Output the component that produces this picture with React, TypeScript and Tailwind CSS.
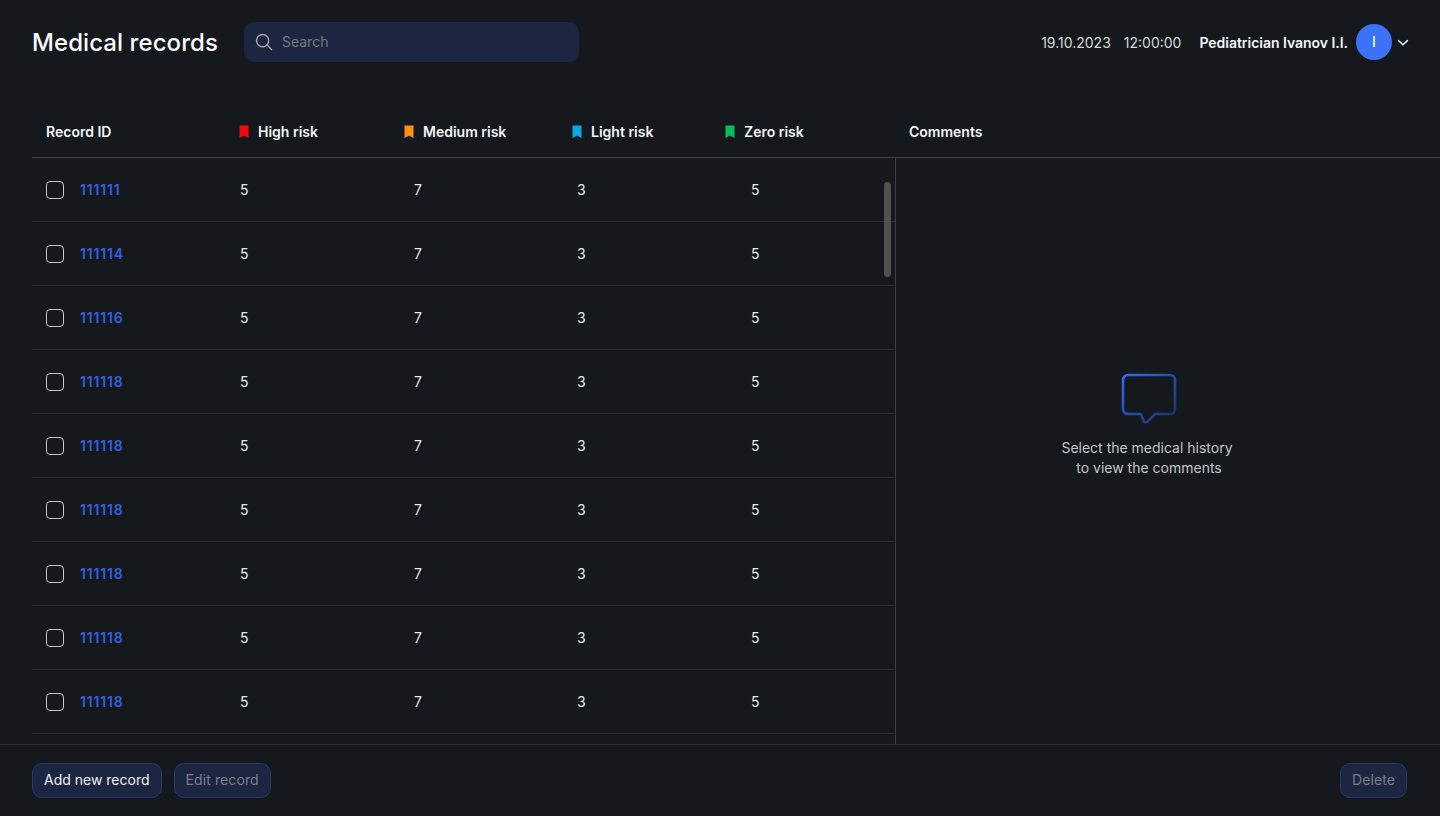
import React from "react";

const ids = ["111111", "111114", "111116", "111118", "111118", "111118", "111118", "111118", "111118"];

function Flag({ color }: { color: string }) {
  return (
    <svg width="10" height="14" viewBox="0 0 10 14" className="shrink-0">
      <path d="M0.5 0.5h9v12.6L5.7 10.9a1.4 1.4 0 0 0-1.4 0L0.5 13.1z" fill={color} />
    </svg>
  );
}

function Head({ color, label }: { color: string; label: string }) {
  return (
    <div className="flex items-center gap-[9px]">
      <Flag color={color} />
      <span>{label}</span>
    </div>
  );
}

const grid = "grid grid-cols-[193px_165px_168px_153px_1fr] items-center";

function Row({ id }: { id: string }) {
  return (
    <div className={`${grid} h-16 shrink-0 border-b border-[#2a2d31] pl-[14px] pt-px text-sm text-[#e8e9ea]`}>
      <div className="flex items-center gap-[16px]">
        <span className="h-[18px] w-[18px] rounded-[4px] border border-[#c4c6c8]" />
        <span className="font-semibold tracking-[0.85px] text-[#2f62e0]">{id}</span>
      </div>
      <div className="pl-px">5</div>
      <div className="pl-[10px]">7</div>
      <div className="pl-[5px]">3</div>
      <div className="pl-[26px]">5</div>
    </div>
  );
}

function Btn({ children, dim }: { children: React.ReactNode; dim?: boolean }) {
  return (
    <button className={`flex h-[35px] items-center rounded-[10px] border border-[#24396f] bg-[#1d2640] px-[11px] pb-px text-sm ${dim ? "tracking-[0.1px] text-[#7a7e89]" : "text-[#eef0f2]"}`}>
      {children}
    </button>
  );
}

export default function App() {
  return (
    <div className="flex h-[816px] w-[1440px] flex-col overflow-hidden bg-[#15191e] font-['Inter',sans-serif] text-white">
      <header className="flex h-[84px] shrink-0 items-center pl-8 pr-[31px]">
        <h1 className="mt-[2px] text-2xl font-medium leading-8 tracking-[0.07px] text-[#fbfbfb]">Medical records</h1>
        <div className="ml-[26px] flex h-10 w-[335px] items-center gap-[8px] rounded-[10px] bg-[#1d2640] px-[11px] text-sm text-[#757a85]">
          <svg width="19" height="18" viewBox="0 0 19 18" fill="none" stroke="#a4a6a9" strokeWidth="1.4" strokeLinecap="round">
            <circle cx="7.6" cy="7.6" r="6.1" />
            <path d="M12.1 12.1L16.6 16.6" />
          </svg>
          <span>Search</span>
        </div>
        <div className="ml-auto flex items-center text-sm">
          <span className="mt-[2px] text-[#d6d7d9]">19.10.2023</span>
          <span className="ml-[13px] mt-[2px] text-[#d6d7d9]">12:00:00</span>
          <span className="ml-[18px] mt-[2px] font-semibold tracking-[-0.03px] text-[#f4f5f6]">Pediatrician Ivanov I.I.</span>
          <span className="ml-2 flex h-9 w-9 items-center justify-center rounded-full bg-[#3b72f6] text-sm font-medium">I</span>
          <svg width="12" height="8" viewBox="0 0 12 8" fill="none" stroke="#f0f1f2" strokeWidth="1.5" strokeLinecap="round" strokeLinejoin="round" className="ml-[5px] mt-[1px]">
            <path d="M1.6 1.6L6 5.8l4.4-4.2" />
          </svg>
        </div>
      </header>

      <div className="ml-8 flex h-[74px] shrink-0 border-b border-[#3d4044] pt-[24px] text-sm font-semibold text-[#f4f5f6]">
        <div className={`${grid} h-12 w-[863px] pl-[14px]`}>
          <div>Record ID</div>
          <Head color="#f00a0a" label="High risk" />
          <Head color="#fb9013" label="Medium risk" />
          <Head color="#08a9e4" label="Light risk" />
          <Head color="#08bb5b" label="Zero risk" />
        </div>
        <div className="flex h-12 items-center pl-[14px]">Comments</div>
      </div>

      <main className="flex min-h-0 flex-1">
        <div className="relative ml-8 flex w-[864px] shrink-0 flex-col overflow-hidden border-r border-[#3d4044]">
          {ids.map((id, i) => (
            <Row key={i} id={id} />
          ))}
          <div className="absolute right-[4px] top-[24px] h-[95px] w-[7px] rounded-full bg-[#4f5153]" />
        </div>
        <div className="flex flex-1 flex-col items-center pr-[38px] pt-[215px] text-sm leading-5 text-[#c3c5c7]">
          <svg width="56" height="52" viewBox="0 0 56 52" fill="none">
            <defs>
              <linearGradient id="cm" x1="0" y1="0" x2="1" y2="1">
                <stop offset="0" stopColor="#2f6bf0" />
                <stop offset="1" stopColor="#1d2f60" />
              </linearGradient>
            </defs>
            <path
              d="M7 2h42a5 5 0 0 1 5 5v29a5 5 0 0 1-5 5H34.2l-7.6 7.6a2.4 2.4 0 0 1-3.5-.1L19.6 41H7a5 5 0 0 1-5-5V7a5 5 0 0 1 5-5z"
              stroke="url(#cm)"
              strokeWidth="2.6"
              strokeLinejoin="round"
            />
          </svg>
          <p className="mt-[13px] text-center">
            <span className="mr-[4px]">Select the medical history</span>
            <br />
            to view the comments
          </p>
        </div>
      </main>

      <footer className="flex h-[72px] shrink-0 items-center border-t border-[#2e3034] pl-8 pr-[33px]">
        <Btn>Add new record</Btn>
        <div className="ml-3"><Btn dim>Edit record</Btn></div>
        <div className="ml-auto"><Btn dim>Delete</Btn></div>
      </footer>
    </div>
  );
}
